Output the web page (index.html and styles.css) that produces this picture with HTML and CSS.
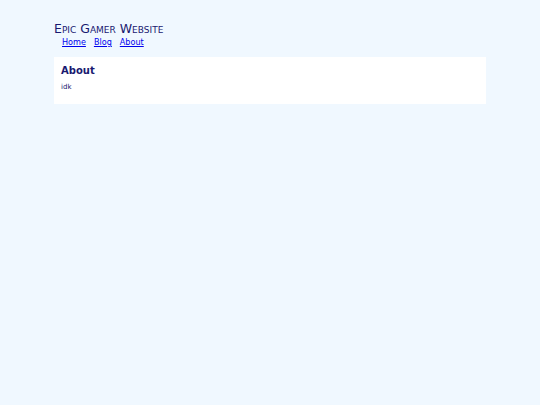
FILE: index.html
```html
<!DOCTYPE html>
<html>
<head>
<meta charset="utf-8">
<link rel="stylesheet" href="styles.css">
</head>
<body>
<div class="page">
  <header class="site-header">
    <div class="site-title">Epic Gamer Website</div>
    <nav class="site-nav">
      <a href="#">Home</a>
      <a href="#">Blog</a>
      <a href="#">About</a>
    </nav>
  </header>
  <main class="card">
    <h2 class="card-title">About</h2>
    <p class="card-text">idk</p>
  </main>
</div>
</body>
</html>
```
FILE: styles.css
```css
html, body {
  margin: 0;
  padding: 0;
  background: #f0f8ff;
}
body {
  font-family: "DejaVu Sans", Verdana, sans-serif;
  color: #191970;
}
.page {
  width: 80%;
  margin: 0 auto;
  padding-top: 22px;
}
.site-title {
  font-size: 12.5px;
  font-variant: small-caps;
  line-height: 14px;
}
.site-nav {
  display: flex;
  gap: 8px;
  padding-left: 8px;
  margin-top: 0;
  font-size: 8.1px;
  line-height: 12px;
}
.site-nav a {
  color: #0000ee;
}
.card {
  display: block;
  background: #fff;
  margin-top: 9px;
  padding: 8px 7px 11.5px;
}
.card-title {
  margin: 0;
  font-size: 10px;
  line-height: 12px;
}
.card-text {
  margin: 6px 0 0;
  font-size: 7px;
  line-height: 9px;
}
```
